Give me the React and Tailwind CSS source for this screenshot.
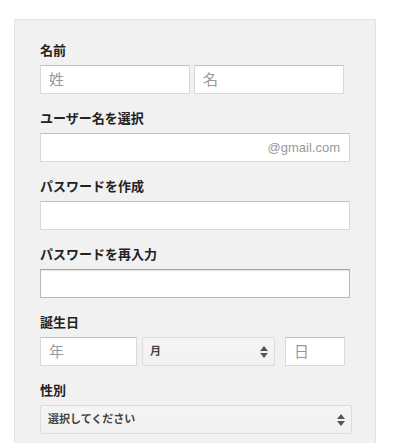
const font = { fontFamily: '"Liberation Sans", "Noto Sans CJK JP", sans-serif' }

const inputCls =
  'h-[29px] border border-[#d9d9d9] border-t-[#c0c0c0] bg-white px-[8px] text-[15px] text-[#222] outline-none placeholder:text-[#999]'

function Label({ children }) {
  return <div className="mb-[6px] h-[17px] text-[13px] font-bold leading-[17px] text-[#222]">{children}</div>
}

function Arrows() {
  return (
    <svg width="8" height="12" viewBox="0 0 8 12" className="shrink-0">
      <path d="M4 0 L8 5 L0 5 Z" fill="#555" />
      <path d="M0 7 L8 7 L4 12 Z" fill="#555" />
    </svg>
  )
}

function Select({ text, className }) {
  return (
    <div
      className={`flex h-[29px] items-center justify-between rounded-[2px] border border-[#dcdcdc] bg-gradient-to-b from-[#f5f5f5] to-[#f1f1f1] pl-[7px] pr-[6px] text-[11px] font-bold text-[#444] ${className}`}
    >
      <span>{text}</span>
      <Arrows />
    </div>
  )
}

export default function App() {
  return (
    <div className="min-h-screen bg-white pt-[19px] pl-[14px]" style={font}>
      <div className="w-[362px] border border-[#e5e5e5] bg-[#f1f1f1] pb-[40px] pl-[25px] pt-[22px]">
        <Label>名前</Label>
        <div className="flex gap-[4px]">
          <input className={`${inputCls} w-[150px]`} placeholder="姓" />
          <input className={`${inputCls} w-[150px]`} placeholder="名" />
        </div>

        <div className="mt-[16px]">
          <Label>ユーザー名を選択</Label>
          <div className={`${inputCls} flex w-[310px] items-center justify-end pr-[9px]`}>
            <span className="text-[13px] text-[#999]">@gmail.com</span>
          </div>
        </div>

        <div className="mt-[16px]">
          <Label>パスワードを作成</Label>
          <input type="password" className={`${inputCls} block w-[310px]`} />
        </div>

        <div className="mt-[16px]">
          <Label>パスワードを再入力</Label>
          <input
            type="password"
            className="block h-[29px] w-[310px] border border-[#b9b9b9] border-t-[#a0a0a0] bg-white px-[8px] shadow-[inset_0_1px_2px_rgba(0,0,0,0.1)] outline-none"
          />
        </div>

        <div className="mt-[16px]">
          <Label>誕生日</Label>
          <div className="flex">
            <input className={`${inputCls} w-[97px]`} placeholder="年" />
            <Select text="月" className="ml-[5px] w-[133px]" />
            <input className={`${inputCls} ml-[10px] w-[60px]`} placeholder="日" />
          </div>
        </div>

        <div className="mt-[16px]">
          <Label>性別</Label>
          <Select text="選択してください" className="w-[312px]" />
        </div>
      </div>
    </div>
  )
}
